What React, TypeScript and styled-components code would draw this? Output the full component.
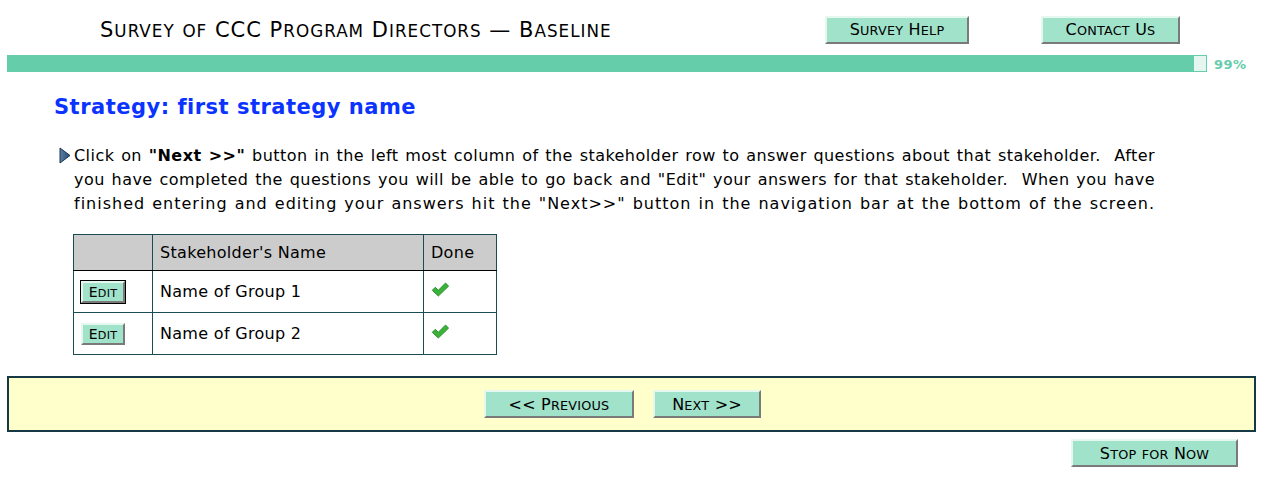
import React from "react";
import styled, { createGlobalStyle } from "styled-components";

const Global = createGlobalStyle`
  html, body { margin: 0; padding: 0; background: #ffffff; }
  body { font-family: "DejaVu Sans", Verdana, sans-serif; color: #000; }
`;

const Lower = styled.span`
  font-size: 0.8em;
  text-transform: uppercase;
`;

const SmallCaps = ({ text }: { text: string }) => {
  const parts = text.match(/[a-z]+|[^a-z]+/g) || [];
  return (
    <>
      {parts.map((p, i) => (/^[a-z]/.test(p) ? <Lower key={i}>{p}</Lower> : <React.Fragment key={i}>{p}</React.Fragment>))}
    </>
  );
};

const Page = styled.div`
  width: 1273px;
  height: 486px;
  overflow: hidden;
  display: flex;
  flex-direction: column;
`;

const Header = styled.div`
  display: flex;
  align-items: center;
  height: 55px;
  padding-top: 4px;
  box-sizing: border-box;
`;

const Title = styled.h1`
  margin: 0;
  width: 825px;
  padding-left: 100px;
  box-sizing: border-box;
  font-size: 21px;
  font-weight: normal;
  letter-spacing: 1px;
  color: #000;
  white-space: nowrap;
`;

const TealButton = styled.button<{ $w: number; $h?: number; $fs?: number; $focused?: boolean }>`
  width: ${(p) => p.$w}px;
  height: ${(p) => p.$h ?? 28}px;
  background: #a0e2ca;
  font-family: "DejaVu Sans", Verdana, sans-serif;
  font-size: ${(p) => p.$fs ?? 16}px;
  letter-spacing: 0.2px;
  color: #000;
  padding: 0;
  box-sizing: border-box;
  border-style: solid;
  border-width: 2px;
  border-color: #e6f7f0 #7a7a7a #7a7a7a #e6f7f0;
  ${(p) => (p.$focused ? "outline: 1px solid #000;" : "")}
  white-space: nowrap;
  cursor: pointer;
`;

const HeaderButtons = styled.div`
  display: flex;
  gap: 72px;
`;

const ProgressRow = styled.div`
  display: flex;
  align-items: center;
  padding-left: 7px;
  height: 17px;
`;

const Bar = styled.div`
  width: 1200px;
  height: 17px;
  background: #e4f6ef;
  border: 1px solid #66cdaa;
  box-sizing: border-box;
  display: flex;
`;

const Fill = styled.div`
  height: 100%;
  background: #66cdaa;
`;

const Pct = styled.span`
  margin-left: 7px;
  font-size: 13px;
  font-weight: bold;
  letter-spacing: 0.4px;
  color: #66cdaa;
  padding-top: 2px;
`;

const Content = styled.div`
  padding-left: 54px;
`;

const Heading = styled.h2`
  margin: 21px 0 0 0;
  font-size: 21px;
  line-height: 28px;
  letter-spacing: 0.5px;
  font-weight: bold;
  color: #0a33ff;
`;

const Instruction = styled.div`
  display: flex;
  margin-top: 23px;
  padding-left: 5px;
`;

const Arrow = styled.svg`
  flex: none;
  width: 12px;
  height: 17px;
  margin-top: 3px;
  margin-right: 3px;
`;

const Para = styled.p`
  margin: 0;
  width: 1081px;
  font-size: 16px;
  line-height: 24px;
  letter-spacing: 0.45px;
  word-spacing: 0.5px;
  text-align: justify;
  text-align-last: justify;
`;

const Wide = styled.span`
  letter-spacing: 1px;
`;

const Table = styled.table`
  margin: 18px 0 0 19px;
  border-collapse: collapse;
  font-size: 16px;
  letter-spacing: 0.3px;
  border: 1px solid #1b4b55;
`;

const Th = styled.th<{ $w: number }>`
  width: ${(p) => p.$w}px;
  height: 36px;
  background: #cccccc;
  font-weight: normal;
  text-align: left;
  padding: 0 7px;
  border: 1px solid #1b4b55;
  border-bottom-color: #000;
  box-sizing: border-box;
`;

const Td = styled.td`
  height: 42px;
  padding: 0 7px;
  border: 1px solid #1b4b55;
  border-top-color: #000;
  box-sizing: border-box;
`;

const Nav = styled.div`
  margin: 21px 17px 0 7px;
  height: 56px;
  background: #ffffcc;
  border: 2px solid #153a45;
  box-sizing: border-box;
  display: flex;
  justify-content: center;
  align-items: center;
  gap: 19px;
  padding-right: 18px;
`;

const Bottom = styled.div`
  display: flex;
  justify-content: flex-end;
  padding-right: 35px;
  margin-top: 7px;
`;

const Check = () => (
  <svg width="19" height="15" viewBox="0 0 19 15">
    <path d="M1.3 8.3 L4.3 5.3 L7.3 8.3 L14.5 1.1 L17.6 4.1 L7.3 14 Z" fill="#3bb33b" stroke="#2a8f2a" strokeWidth="1" strokeLinejoin="round" />
  </svg>
);

export default function App() {
  return (
    <>
      <Global />
      <Page>
        <Header>
          <Title>
            <SmallCaps text="Survey of CCC Program Directors — Baseline" />
          </Title>
          <HeaderButtons>
            <TealButton $w={144}>
              <SmallCaps text="Survey Help" />
            </TealButton>
            <TealButton $w={139}>
              <SmallCaps text="Contact Us" />
            </TealButton>
          </HeaderButtons>
        </Header>
        <ProgressRow>
          <Bar>
            <Fill style={{ width: "99%" }} />
          </Bar>
          <Pct>99%</Pct>
        </ProgressRow>
        <Content>
          <Heading>Strategy: first strategy name</Heading>
          <Instruction>
            <Arrow viewBox="0 0 12 17">
              <defs>
                <linearGradient id="ag" x1="0" y1="0" x2="1" y2="0">
                  <stop offset="0" stopColor="#5b7fa6" />
                  <stop offset="1" stopColor="#2c4c70" />
                </linearGradient>
              </defs>
              <polygon points="1,1 11,8.5 1,16" fill="url(#ag)" stroke="#1e3550" strokeWidth="1" strokeLinejoin="round" />
            </Arrow>
            <Para>
              Click on <b>"Next &gt;&gt;"</b> button in the left most column of the stakeholder row to answer questions about that stakeholder.{"\u00a0 "}After you have completed the questions you will be able to go back and "Edit" your answers for that stakeholder.{"\u00a0 "}When you have <Wide>finished entering and editing your answers hit the "Next&gt;&gt;" button in the navigation bar at the bottom of the screen.</Wide>
            </Para>
          </Instruction>
          <Table>
            <thead>
              <tr>
                <Th $w={79}></Th>
                <Th $w={271}>Stakeholder's Name</Th>
                <Th $w={73}>Done</Th>
              </tr>
            </thead>
            <tbody>
              {["Name of Group 1", "Name of Group 2"].map((n, i) => (
                <tr key={n}>
                  <Td>
                    <TealButton $w={44} $h={22} $fs={14} $focused={i === 0}>
                      <SmallCaps text="Edit" />
                    </TealButton>
                  </Td>
                  <Td>{n}</Td>
                  <Td>
                    <Check />
                  </Td>
                </tr>
              ))}
            </tbody>
          </Table>
        </Content>
        <Nav>
          <TealButton $w={150}>
            <SmallCaps text="<< Previous" />
          </TealButton>
          <TealButton $w={108}>
            <SmallCaps text="Next >>" />
          </TealButton>
        </Nav>
        <Bottom>
          <TealButton $w={167}>
            <SmallCaps text="Stop for Now" />
          </TealButton>
        </Bottom>
      </Page>
    </>
  );
}
